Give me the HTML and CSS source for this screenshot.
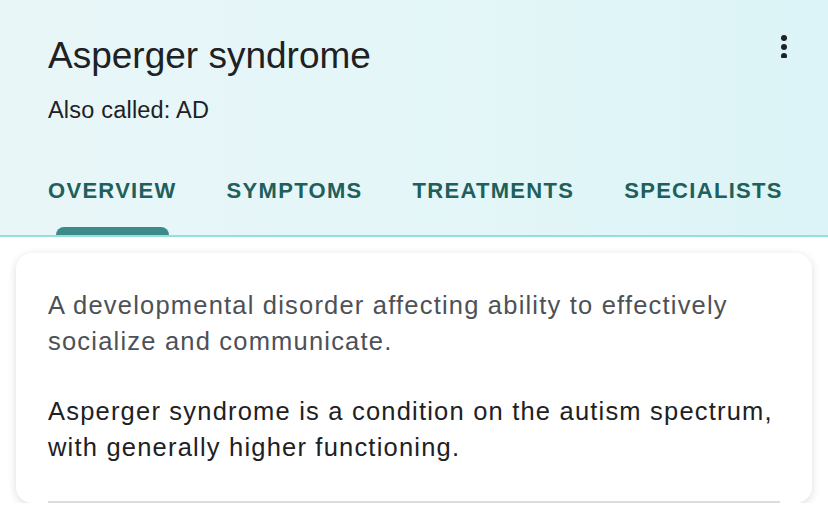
FILE: index.html
```html
<!DOCTYPE html>
<html lang="en">
<head>
<meta charset="UTF-8" />
<meta name="viewport" content="width=device-width, initial-scale=1" />
<title>Asperger syndrome</title>
<link rel="stylesheet" href="styles.css">
</head>
<body>
  <header class="topic">
    <div class="topic-head">
      <div>
        <h1>Asperger syndrome</h1>
        <p class="aka">Also called: AD</p>
      </div>
      <button class="more" aria-label="More options">
        <svg width="24" height="24" viewBox="0 0 24 24" aria-hidden="true">
          <circle cx="12" cy="4" r="3" />
          <circle cx="12" cy="13" r="3" />
          <circle cx="12" cy="22" r="3" />
        </svg>
      </button>
    </div>
    <nav class="tabs">
      <a class="tab active" href="#">Overview</a>
      <a class="tab" href="#">Symptoms</a>
      <a class="tab" href="#">Treatments</a>
      <a class="tab" href="#">Specialists</a>
    </nav>
  </header>

  <section class="card">
    <p class="summary">A developmental disorder affecting ability to effectively socialize and communicate.</p>
    <p class="detail">Asperger syndrome is a condition on the autism spectrum, with generally higher functioning.</p>
    <hr class="divider" />
  </section>
</body>
</html>
```

FILE: styles.css
```css
:root {
  --teal-dark: #215f5c;
  --teal: #3d8a8a;
  --teal-line: #92dfe2;
  --text: #202124;
  --text-muted: #4d5156;
  --font: "Liberation Sans", Arial, sans-serif;
}
* {
  box-sizing: border-box;
}
body {
  margin: 0;
  background: #fff;
  font-family: var(--font);
  color: var(--text);
  overflow: hidden;
}
.topic {
  background: linear-gradient(90deg, #e9f6f8 0%, #e4f6f8 50%, #dcf4f7 100%);
  border-bottom: 2px solid var(--teal-line);
  padding: 34px 0 0 48px;
}
.topic-head {
  display: flex;
  justify-content: space-between;
  align-items: flex-start;
  padding-right: 32px;
}
h1 {
  margin: 0;
  font-size: 37px;
  line-height: 44px;
  font-weight: 400;
  color: var(--text);
}
.aka {
  margin: 16px 0 0;
  font-size: 23.5px;
  line-height: 32px;
  letter-spacing: 0.2px;
}
.more {
  background: none;
  border: none;
  padding: 0;
  margin-top: -1px;
  width: 24px;
  height: 26px;
  cursor: pointer;
}
.more svg {
  display: block;
  fill: var(--text);
}
.tabs {
  display: flex;
  gap: 50px;
  margin-top: 51px;
}
.tab {
  position: relative;
  display: block;
  padding-bottom: 30px;
  font-size: 22px;
  line-height: 28px;
  font-weight: 700;
  letter-spacing: 1.3px;
  text-transform: uppercase;
  text-decoration: none;
  color: var(--teal-dark);
}
.tab.active::after {
  content: "";
  position: absolute;
  left: 8px;
  right: 8px;
  bottom: 0;
  height: 8px;
  background: var(--teal);
  border-radius: 8px 8px 0 0;
}
.card {
  margin: 16px 16px 0;
  padding: 34px 32px 0;
  background: #fff;
  border-radius: 16px;
  box-shadow: 0 2px 8px rgba(0, 0, 0, 0.14);
  font-size: 25.5px;
  line-height: 36px;
  letter-spacing: 1.2px;
}
.card p {
  margin: 0 0 34px;
}
.summary {
  color: var(--text-muted);
}
.detail {
  color: var(--text);
}
.card .detail {
  margin-bottom: 0;
}
.divider {
  margin: 36px 0 0;
  border: none;
  border-top: 2px solid #dadce0;
}
```
